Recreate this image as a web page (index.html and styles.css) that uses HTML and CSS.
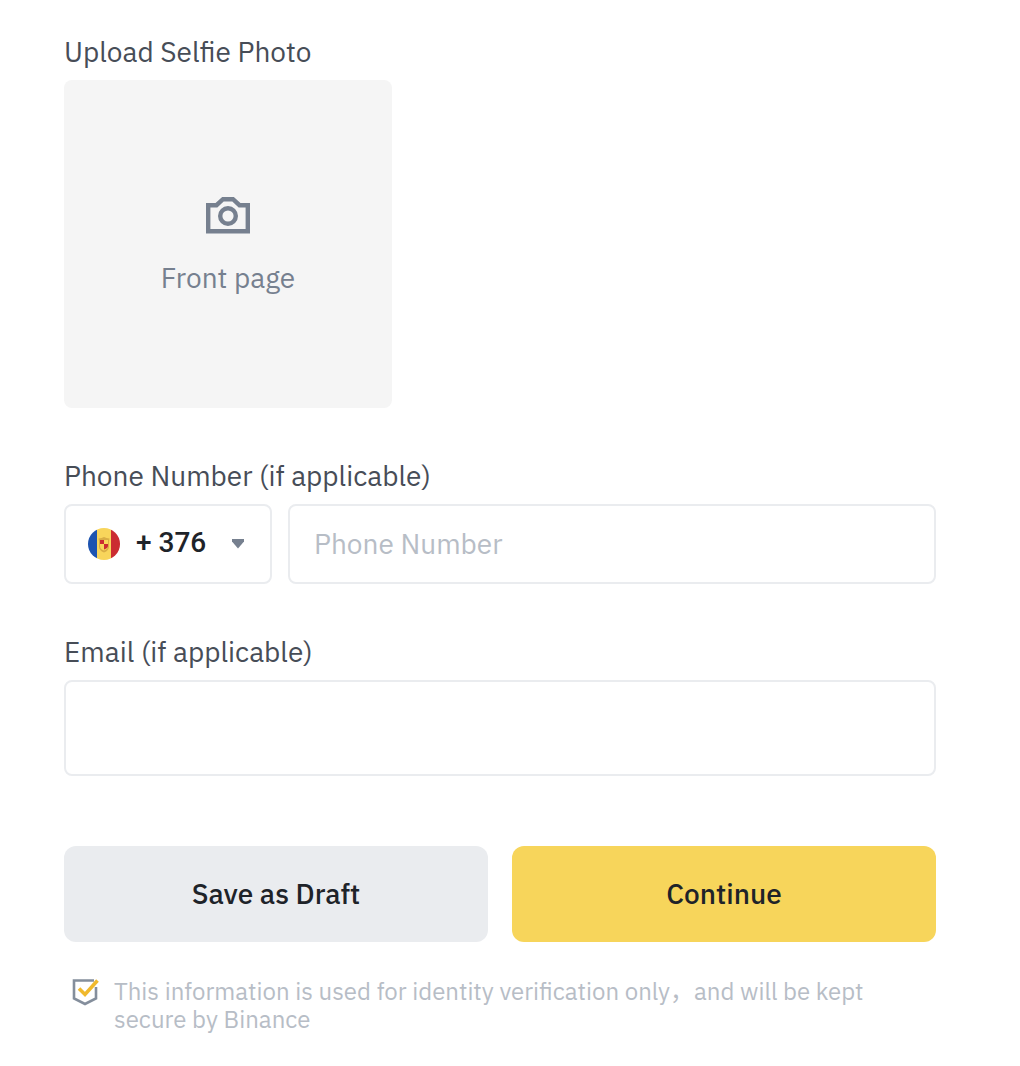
FILE: index.html
```html
<!DOCTYPE html>
<html lang="en">
<head>
  <meta charset="UTF-8" />
  <meta name="viewport" content="width=device-width, initial-scale=1" />
  <title>Identity Verification</title>
  <link rel="stylesheet" href="styles.css">
</head>
<body>

  <form class="verify-form">
    <div class="field">
      <label class="field-label" for="selfie">Upload Selfie Photo</label>
      <label class="upload">
        <input class="upload-input" type="file" id="selfie" accept="image/*" />
        <svg class="upload-icon" viewBox="0 0 44 38" fill="none" stroke="currentColor" stroke-width="4.400" aria-hidden="true">
          <path d="M2.200 9.200H10.500L17 3.200H27L33.500 9.200H41.800V35.300H2.200Z" />
          <circle cx="22" cy="20" r="7.800" />
        </svg>
        <span>Front page</span>
      </label>
    </div>

    <div class="field">
      <label class="field-label" for="phone">Phone Number (if applicable)</label>
      <div class="phone-row">
        <div class="country box">
          <svg class="flag" viewBox="0 0 32 32" aria-hidden="true">
            <clipPath id="flag-clip"><circle cx="16" cy="16" r="16" /></clipPath>
            <g clip-path="url(#flag-clip)">
              <path fill="#1d54b0" d="M0 0h9v32H0z" />
              <path fill="#f8d55b" d="M9 0h14v32H9z" />
              <path fill="#cb2c31" d="M23 0h9v32h-9z" />
            </g>
            <path fill="#d9ad45" d="M10.500 10.500l3-.5L16 9l2.500 1 3 .5-.5 3v5q0 4-5 6q-5-2-5-6v-5z" />
            <path fill="#f8d55b" d="M12 12h8v6q0 3-4 4.500q-4-1.500-4-4.500z" />
            <path fill="#cb2c31" d="M12 12h4v4h-4zM16 16h4v2q0 2-4 3.500z" />
          </svg>
          <select class="country-select" aria-label="Country code">
            <option>+ 376</option>
          </select>
          <svg class="caret" viewBox="0 0 12 10" aria-hidden="true">
            <path fill="currentColor" d="M0 0h12v2.500L6 9.500 0 2.500z" />
          </svg>
        </div>
        <input class="text-input box" type="tel" id="phone" placeholder="Phone Number" />
      </div>
    </div>

    <div class="field">
      <label class="field-label" for="email">Email (if applicable)</label>
      <input class="text-input text-input-tall box" type="email" id="email" />
    </div>

    <div class="actions">
      <button class="btn btn-draft" type="button">Save as Draft</button>
      <button class="btn btn-continue" type="submit">Continue</button>
    </div>

    <div class="note">
      <svg class="note-icon" viewBox="0 0 28 30" fill="none" stroke-width="2.600" aria-hidden="true">
        <path stroke="#848e9c" d="M22 3.500H2V21.500L13 27L24 21.500V10" />
        <path stroke="#f0b92d" stroke-width="3.600" d="M7 11.500L13 17.500L25.500 3.500" />
      </svg>
      <p>This information is used for identity verification only，and will be kept secure by Binance</p>
    </div>
  </form>

</body>
</html>
```

FILE: styles.css
```css
* {
  box-sizing: border-box;
}

body {
  margin: 0;
  padding: 36px 84px 32px 64px;
  background: #fff;
  color: #474d57;
  font-family: "IBM Plex Sans", Roboto, "Noto Sans CJK SC", sans-serif;
  font-size: 28px;
  line-height: 32px;
}

.field {
  margin-bottom: 52px;
}

.field-label {
  display: block;
  margin-bottom: 12px;
}

.upload {
  display: flex;
  flex-direction: column;
  align-items: center;
  justify-content: center;
  gap: 28px;
  width: 328px;
  max-width: 100%;
  aspect-ratio: 1;
  padding-top: 2px;
  border-radius: 8px;
  background: #f5f5f5;
  color: #76808f;
  cursor: pointer;
}

.upload-input {
  position: absolute;
  width: 1px;
  height: 1px;
  opacity: 0;
}

.upload-icon {
  width: 44px;
  height: 38px;
}

.box {
  border: 2px solid #eaecef;
  border-radius: 8px;
  background: #fff;
}

.phone-row {
  display: flex;
  gap: 16px;
}

.country {
  display: flex;
  align-items: center;
  flex: none;
  width: 208px;
  height: 80px;
  padding: 0 26px 0 22px;
}

.flag {
  flex: none;
  width: 32px;
  height: 32px;
}

.country-select {
  flex: 1;
  min-width: 0;
  height: 100%;
  padding: 0 0 2px 16px;
  border: none;
  outline: none;
  appearance: none;
  background: none;
  color: #1e2329;
  font: inherit;
  font-family: Roboto, sans-serif;
  font-weight: 500;
}

.caret {
  flex: none;
  width: 12px;
  height: 10px;
  color: #76808f;
}

.text-input {
  flex: 1;
  display: block;
  width: 100%;
  min-width: 0;
  height: 80px;
  padding: 0 24px 2px;
  color: #1e2329;
  font: inherit;
}

.text-input::placeholder {
  color: #b7bdc6;
}

.text-input-tall {
  height: 96px;
}

.actions {
  display: grid;
  grid-template-columns: 1fr 1fr;
  gap: 24px;
  margin-top: 70px;
}

.btn {
  height: 96px;
  border: none;
  border-radius: 12px;
  color: #1e2329;
  font: inherit;
  font-weight: 500;
  cursor: pointer;
}

.btn-draft {
  background: #eaecef;
}

.btn-continue {
  background: #f7d55b;
}

.note {
  display: flex;
  gap: 14px;
  margin-top: 35px;
  padding: 0 64px 0 8px;
  color: #b7bdc6;
  font-size: 24px;
  line-height: 28px;
}

.note-icon {
  flex: none;
  width: 28px;
  height: 30px;
}

.note p {
  margin: 0;
}
```
